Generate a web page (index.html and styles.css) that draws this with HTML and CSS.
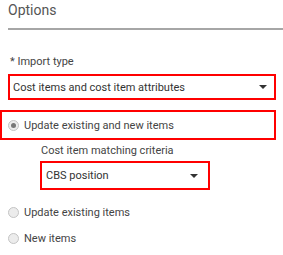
FILE: index.html
```html
<!DOCTYPE html>
<html lang="en">
<head>
    <title>Options</title>
    <link rel="stylesheet" href="styles.css">
</head>
<body>
<div class="panel">
    <div class="title">Options</div>

    <div class="field-label">* Import type</div>
    <div class="select hl wide">
        <span>Cost items and cost item attributes</span>
        <span class="caret"></span>
    </div>

    <div class="option hl option-main">
        <span class="radio checked"></span>
        <span>Update existing and new items</span>
    </div>

    <div class="sub">
        <div class="field-label sub-label">Cost item matching criteria</div>
        <div class="select hl narrow">
            <span>CBS position</span>
            <span class="caret"></span>
        </div>
    </div>

    <div class="option option-first">
        <span class="radio"></span>
        <span>Update existing items</span>
    </div>
    <div class="option option-next">
        <span class="radio"></span>
        <span>New items</span>
    </div>
</div>
</body>
</html>
```

FILE: styles.css
```css
html, body {
    margin: 0;
    background-color: #fff;
    font-family: Roboto, 'Liberation Sans', sans-serif;
    color: #444;
}

.panel {
    width: 283px;
}

.title {
    margin-left: 8px;
    padding-bottom: 8px;
    font-size: 14px;
    line-height: 20px;
    color: #555;
    border-bottom: 2px solid #a6a6a6;
}

.field-label {
    margin: 25px 0 0 10px;
    font-size: 11px;
    line-height: 14px;
    color: #444;
}

.hl {
    border: 2px solid #ff0000;
    box-sizing: border-box;
}

.select {
    display: flex;
    align-items: center;
    justify-content: space-between;
    font-size: 11px;
    color: #333;
}

.wide {
    margin: 5px 0 0 8px;
    width: 268px;
    height: 26px;
    padding: 0 7px 0 3px;
}

.caret {
    width: 0;
    height: 0;
    border-left: 4px solid transparent;
    border-right: 4px solid transparent;
    border-top: 4px solid #333;
}

.option {
    display: flex;
    align-items: center;
    gap: 5px;
    font-size: 11px;
    color: #444;
    height: 20px;
    padding-left: 8px;
}

.option-main {
    margin-top: 10px;
    width: 276px;
    height: 30px;
    padding-left: 6px;
}

.radio {
    width: 11px;
    height: 11px;
    border-radius: 50%;
    border: 1px solid #c4c4c4;
    background: #ececec;
    box-sizing: border-box;
    display: flex;
    align-items: center;
    justify-content: center;
}

.radio.checked::after {
    content: "";
    width: 5px;
    height: 5px;
    border-radius: 50%;
    background: #777;
}

.sub {
    padding-left: 40px;
}

.sub-label {
    margin: 4px 0 0 1px;
}

.narrow {
    margin-top: 3px;
    width: 170px;
    height: 29px;
    padding: 0 10px 0 4px;
}

.option-first {
    margin-top: 12px;
}

.option-next {
    margin-top: 6px;
}
```
